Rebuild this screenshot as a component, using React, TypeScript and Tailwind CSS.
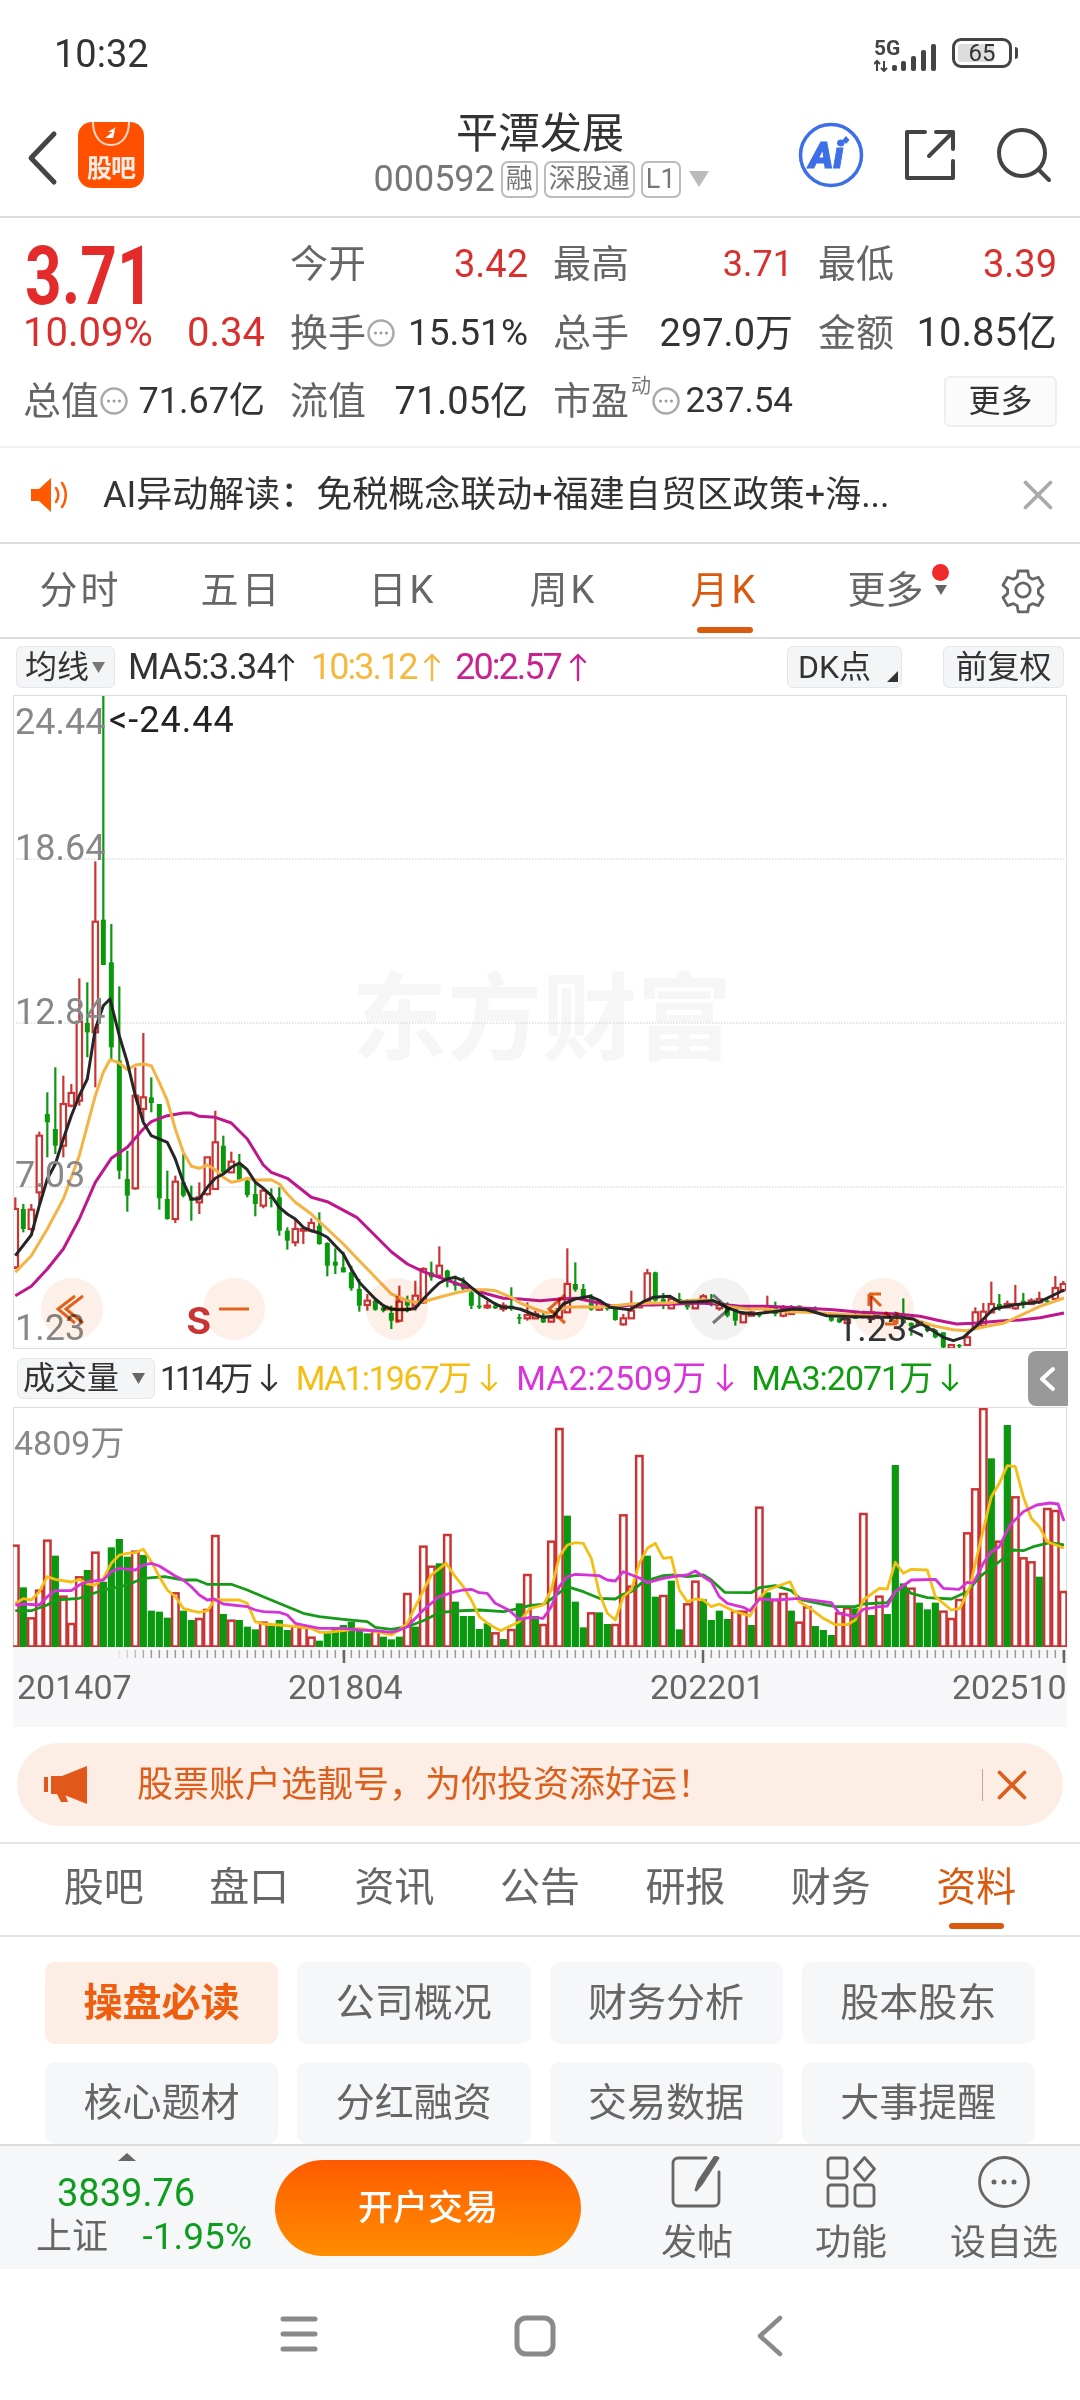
import React from 'react';
import { X } from 'lucide-react';

const RED = '#C93535';
const GREEN = '#0A980F';

// candles: [up, high, top, bottom, low], read off the left half of the chart
const candlesA: [number, number, number, number, number][] = [
  [1, 1105, 1140, 1315, 1320], [0, 1125, 1140, 1200, 1210], [1, 1125, 1142, 1200, 1205], [1, 908, 920, 1090, 1125],
  [0, 790, 855, 880, 985], [0, 715, 900, 950, 975], [1, 740, 825, 950, 985], [1, 765, 792, 830, 835],
  [1, 448, 578, 815, 830], [0, 460, 582, 610, 685], [1, 97, 278, 610, 775], [0, -402, 272, 408, 408],
  [0, 285, 400, 655, 690], [0, 472, 695, 1025, 1050], [0, 965, 1050, 1100, 1148], [1, 715, 800, 1078, 1082],
  [1, 612, 805, 840, 875], [0, 745, 805, 822, 850], [0, 825, 825, 1108, 1142], [0, 1025, 1110, 1170, 1172],
  [1, 1040, 1058, 1170, 1182], [0, 975, 1060, 1100, 1105], [0, 1070, 1105, 1115, 1175], [1, 1060, 1105, 1120, 1155],
  [1, 985, 985, 1095, 1100], [1, 845, 940, 1080, 1082], [0, 920, 950, 1030, 1035], [1, 968, 998, 1030, 1032],
  [0, 975, 1005, 1052, 1055], [0, 1050, 1055, 1098, 1105], [0, 1060, 1095, 1125, 1162], [1, 1075, 1085, 1130, 1138],
  [0, 1078, 1105, 1110, 1135], [0, 1075, 1105, 1205, 1220], [0, 1195, 1205, 1235, 1262], [1, 1170, 1200, 1240, 1252],
  [1, 1195, 1200, 1205, 1245], [1, 1168, 1182, 1205, 1210], [0, 1150, 1190, 1245, 1247], [0, 1240, 1242, 1310, 1342],
  [0, 1258, 1298, 1310, 1335], [0, 1268, 1315, 1330, 1330], [0, 1310, 1330, 1378, 1385], [0, 1350, 1380, 1430, 1448],
  [1, 1395, 1415, 1428, 1445], [0, 1410, 1415, 1442, 1445], [0, 1425, 1435, 1445, 1450], [0, 1430, 1452, 1475, 1500],
  [1, 1370, 1418, 1475, 1480], [0, 1400, 1415, 1430, 1450], [1, 1355, 1400, 1430, 1445], [1, 1315, 1320, 1420, 1425],
  [0, 1298, 1330, 1345, 1355], [1, 1252, 1310, 1340, 1345], [0, 1322, 1325, 1350, 1375], [0, 1340, 1360, 1370, 1385],
  [0, 1345, 1360, 1380, 1385], [0, 1385, 1390, 1430, 1440], [0, 1395, 1430, 1435, 1440], [1, 1415, 1430, 1435, 1440],
  [0, 1420, 1430, 1438, 1440], [1, 1420, 1430, 1440, 1448], [0, 1375, 1430, 1440, 1445], [0, 1455, 1465, 1468, 1485],
];

// the flat right half, in finer units
const candlesB: [number, number, number, number, number][] = [
  [1, 275, 285, 298, 300], [0, 280, 290, 310, 312], [1, 295, 297, 308, 310], [1, 235, 270, 295, 295],
  [1, 88, 195, 280, 282], [0, 130, 195, 212, 218], [0, 195, 210, 235, 240], [0, 225, 235, 272, 275],
  [1, 240, 250, 272, 275], [0, 260, 265, 270, 275], [0, 265, 270, 303, 305], [1, 285, 298, 316, 320],
  [1, 215, 275, 298, 300], [1, 250, 255, 265, 265], [1, 150, 163, 245, 250], [0, 158, 160, 245, 248],
  [0, 222, 240, 258, 270], [1, 235, 240, 268, 268], [0, 222, 240, 250, 252], [0, 240, 250, 265, 272],
  [1, 250, 252, 268, 270], [1, 225, 232, 245, 247], [0, 225, 240, 248, 262], [1, 245, 258, 268, 275],
  [0, 250, 260, 290, 295], [0, 270, 270, 305, 320], [1, 283, 285, 310, 312], [1, 275, 280, 290, 290],
  [0, 280, 285, 290, 295], [1, 230, 265, 275, 280], [0, 248, 265, 285, 292], [1, 258, 270, 290, 295],
  [1, 258, 265, 285, 287], [0, 260, 260, 275, 280], [0, 275, 275, 280, 282], [0, 262, 270, 275, 278],
  [0, 280, 282, 288, 290], [0, 285, 287, 305, 308], [0, 295, 298, 310, 312], [1, 300, 302, 312, 312],
  [0, 280, 295, 298, 300], [0, 275, 285, 295, 298], [1, 232, 280, 300, 302], [1, 290, 290, 295, 295],
  [1, 285, 287, 292, 292], [0, 278, 285, 295, 298], [0, 238, 285, 312, 315], [0, 310, 312, 322, 350],
  [1, 310, 312, 318, 320], [0, 315, 318, 335, 340], [0, 330, 333, 355, 358], [0, 340, 340, 385, 395],
  [1, 375, 378, 388, 388], [0, 375, 378, 382, 388], [1, 340, 355, 378, 380], [1, 265, 280, 325, 332],
  [1, 252, 278, 320, 325], [1, 188, 255, 280, 283], [0, 225, 255, 265, 275], [1, 245, 255, 265, 268],
  [1, 198, 255, 268, 272], [0, 222, 245, 252, 268], [1, 238, 245, 255, 258], [1, 218, 240, 250, 255],
  [0, 240, 245, 250, 255], [1, 171, 207, 240, 245], [1, 186, 195, 213, 220], [1, 183, 186, 207, 210],
];

const candles = [
  ...candlesA.map((c) => [c[0], ...c.slice(1).map((v) => 830 + v / 3)]),
  [1, 830 + 1420 / 3, 830 + 1458 / 3, 830 + 1468 / 3, 830 + 1475 / 3],
  ...candlesB.map((c) => [c[0], ...c.slice(1).map((v) => 1220 + v / 3)]),
];

// volume tops: [up, top]
const volA: [number, number][] = [
  [1, 437], [0, 562], [1, 655], [1, 572], [1, 422], [0, 467], [1, 590], [1, 672], [1, 532], [0, 510], [1, 458],
  [0, 545], [0, 442], [0, 417], [0, 470], [1, 455], [0, 465], [0, 632], [0, 635], [0, 653], [1, 580], [0, 632],
  [0, 660], [1, 657], [1, 630], [1, 408], [0, 642], [1, 662], [0, 660], [0, 680], [0, 688], [1, 668], [0, 678],
  [0, 660], [0, 690], [1, 680], [1, 682], [1, 713], [0, 722], [0, 695], [0, 685], [0, 675], [0, 665], [0, 690],
  [0, 700], [1, 695], [0, 710], [0, 718], [0, 710], [1, 582], [0, 680], [1, 440], [1, 500], [0, 490], [1, 405],
  [0, 605], [0, 648], [0, 648], [0, 687], [0, 670], [1, 700], [0, 717], [1, 690], [0, 610], [1, 525],
  [0, 648], [1, 675], [1, 425], [1, 87], [0, 347], [0, 605], [0, 682], [1, 640], [0, 637], [0, 672], [1, 675],
  [1, 346], [1, 560], [1, 168], [0, 467], [0, 590], [1, 588], [0, 542], [0, 688], [1, 613], [1, 545], [0, 598],
  [0, 660], [0, 632], [0, 657], [1, 635], [1, 635], [0, 675], [1, 323], [0, 577], [1, 600], [1, 582], [0, 632],
  [1, 668], [1, 622], [0, 678], [0, 690], [0, 705], [1, 640], [1, 625], [0, 625], [1, 342], [0, 645], [1, 590],
  [0, 642], [0, 195], [0, 550], [1, 566], [0, 608], [0, 628], [0, 608], [1, 635], [1, 657], [1, 600], [1, 400],
  [1, 268], [1, 2], [0, 175], [1, 425], [0, 75], [1, 292], [1, 475], [1, 487], [0, 530], [1, 327], [1, 333], [1, 576],
];

const toLine = (pts: number[][], ox: number, oy: number) =>
  pts.map(([x, y]) => `${(ox + x / 3).toFixed(1)},${(oy + y / 3).toFixed(1)}`).join(' ');

const ma5 = toLine([[16,1280],[64,1218],[88,1130],[112,1050],[136,1005],[160,930],[184,860],[208,800],[232,750],[256,600],[280,530],[300,510],[328,620],[352,700],[376,800],[400,880],[424,920],[472,940],[496,990],[520,1060],[544,1110],[568,1110],[592,1075],[616,1048],[640,1035],[664,1015],[688,1002],[712,1022],[736,1060],[760,1078],[784,1100],[808,1135],[832,1155],[856,1170],[880,1195],[904,1205],[928,1212],[952,1225],[976,1250],[1000,1275],[1024,1320],[1048,1360],[1072,1385],[1096,1410],[1120,1430],[1144,1440],[1168,1442],[1192,1442],[1216,1438],[1240,1410],[1264,1385],[1288,1362],[1312,1350],[1336,1345],[1360,1355],[1384,1375],[1408,1395],[1432,1410],[1456,1425],[1480,1435],[1504,1435],[1528,1440]], 10, 830)
  + ' ' + toLine([[0,270],[45,288],[70,295],[100,292],[130,255],[165,240],[210,232],[240,245],[270,265],[330,272],[370,248],[400,235],[450,232],[480,250],[530,248],[580,245],[620,265],[660,280],[700,285],[760,278],[820,270],[860,272],[920,290],[1000,293],[1080,295],[1140,295],[1180,300],[1230,330],[1270,355],[1300,365],[1330,355],[1370,320],[1420,270],[1480,258],[1560,248],[1632,213]], 520, 1220);
const ma10 = toLine([[16,1330],[64,1280],[112,1200],[160,1110],[208,980],[232,890],[256,800],[280,730],[300,692],[328,702],[352,722],[376,708],[400,705],[424,710],[448,760],[472,815],[496,900],[520,970],[544,1012],[568,1018],[592,1008],[616,1022],[640,1045],[664,1060],[688,1055],[712,1048],[736,1053],[784,1052],[808,1065],[832,1095],[856,1120],[904,1155],[952,1200],[1000,1245],[1048,1295],[1096,1345],[1144,1395],[1192,1415],[1216,1420],[1240,1418],[1288,1405],[1336,1392],[1384,1382],[1432,1382],[1456,1385],[1504,1405]], 10, 830)
  + ' ' + toLine([[0,252],[40,268],[80,282],[110,275],[140,265],[190,263],[230,265],[270,262],[330,255],[400,252],[450,252],[500,245],[560,242],[620,262],[680,270],[740,270],[800,278],[860,280],[920,283],[1000,288],[1080,292],[1180,300],[1240,320],[1300,332],[1340,335],[1400,322],[1450,313],[1500,290],[1560,262],[1632,237]], 520, 1220);
const ma20 = toLine([[16,1400],[64,1372],[112,1320],[160,1260],[208,1170],[256,1060],[304,988],[352,955],[400,900],[424,878],[472,860],[520,852],[544,852],[568,862],[616,865],[664,882],[712,930],[760,1008],[784,1030],[832,1048],[904,1105],[952,1118],[1040,1165],[1096,1220],[1144,1268],[1192,1305],[1240,1328],[1288,1345],[1336,1362],[1384,1380],[1432,1395],[1480,1408]], 10, 830)
  + ' ' + toLine([[0,240],[60,245],[120,240],[170,238],[220,248],[280,262],[340,258],[400,258],[470,255],[540,252],[600,256],[660,262],[740,262],[800,265],[860,268],[940,272],[1020,280],[1130,285],[1200,292],[1260,305],[1310,315],[1360,313],[1430,307],[1500,303],[1560,296],[1632,282]], 520, 1220);

const vYellow = toLine([[16,610],[40,596],[64,600],[88,575],[112,530],[136,538],[184,546],[208,538],[232,552],[256,555],[280,535],[304,490],[328,465],[352,460],[376,458],[400,448],[424,485],[448,530],[472,570],[496,590],[520,625],[544,632],[568,637],[592,632],[616,598],[640,600],[688,600],[712,610],[736,665],[760,672],[808,675],[856,680],[904,685],[928,697],[952,697],[1000,692],[1048,685],[1096,695],[1144,705],[1168,690],[1192,670],[1216,620],[1264,525],[1308,490],[1336,530],[1360,560],[1384,600],[1408,650],[1440,675],[1472,692],[1496,680],[1528,665]], 10, 1400)
  + ' ' + toLine([[0,625],[40,615],[64,570],[88,470],[112,435],[136,428],[160,430],[184,475],[208,580],[232,640],[256,660],[280,590],[304,570],[328,490],[352,445],[376,430],[400,475],[424,472],[448,570],[472,605],[496,597],[520,600],[544,620],[568,612],[616,635],[660,648],[688,595],[712,570],[780,545],[808,605],[840,625],[880,655],[916,674],[952,674],[976,660],[1000,600],[1048,565],[1072,567],[1096,487],[1120,520],[1144,508],[1192,510],[1216,590],[1264,630],[1290,625],[1320,560],[1350,430],[1384,290],[1408,250],[1432,197],[1456,200],[1480,290],[1504,355],[1528,380],[1552,425],[1602,444]], 530, 1400);
const vMagenta = toLine([[16,615],[40,612],[88,615],[112,590],[136,572],[184,572],[208,555],[232,545],[280,540],[304,515],[328,505],[376,510],[400,495],[424,490],[448,498],[496,528],[520,540],[544,560],[568,585],[592,600],[612,597],[640,612],[712,620],[736,630],[760,635],[808,637],[832,645],[856,670],[880,675],[928,685],[1000,685],[1048,690],[1096,692],[1144,697],[1168,690],[1192,680],[1240,630],[1288,590],[1336,575],[1360,570],[1384,568],[1408,578],[1432,580],[1456,610],[1496,630],[1528,658]], 10, 1400)
  + ' ' + toLine([[0,652],[40,655],[64,620],[88,560],[112,530],[136,523],[208,527],[232,540],[256,543],[280,515],[330,535],[352,548],[400,535],[440,528],[472,525],[496,513],[520,530],[544,545],[568,590],[592,610],[640,622],[660,632],[688,597],[736,600],[808,595],[904,608],[928,640],[976,650],[1000,628],[1048,620],[1072,618],[1096,575],[1144,540],[1216,538],[1240,565],[1288,568],[1312,547],[1330,550],[1360,490],[1384,455],[1408,440],[1440,375],[1480,335],[1520,315],[1560,309],[1584,312],[1602,363]], 530, 1400);
const vGreen = toLine([[16,632],[64,632],[112,615],[136,600],[208,595],[280,570],[352,555],[400,535],[464,530],[520,540],[560,540],[592,553],[664,553],[712,570],[760,590],[880,640],[928,650],[1000,658],[1072,665],[1096,682],[1144,688],[1192,680],[1240,662],[1288,638],[1336,633],[1408,630],[1480,635],[1530,625]], 10, 1400)
  + ' ' + toLine([[0,616],[40,613],[64,597],[112,560],[160,575],[208,595],[256,597],[280,583],[304,575],[340,545],[400,527],[432,525],[472,530],[520,525],[544,540],[584,577],[664,578],[688,563],[736,557],[784,572],[816,600],[880,613],[916,620],[976,620],[1000,612],[1072,608],[1096,575],[1120,560],[1144,580],[1192,593],[1264,597],[1312,575],[1350,530],[1408,485],[1448,450],[1480,452],[1510,440],[1560,428],[1602,435]], 530, 1400);

const cx = (i: number) => 15.33 + 8 * i;

function Arrow({ up, color }: { up?: boolean; color: string }) {
  return (
    <svg width="20" height="30" viewBox="0 0 20 30" fill="none" stroke={color} strokeWidth="2.4" strokeLinecap="round" strokeLinejoin="round">
      {up ? <path d="M10 28V3M3 10l7-7 7 7" /> : <path d="M10 2v25M3 20l7 7 7-7" />}
    </svg>
  );
}

function Dots() {
  return (
    <svg width="30" height="30" viewBox="0 0 30 30" fill="none" className="shrink-0">
      <circle cx="15" cy="15" r="12.5" stroke="#aaa" strokeWidth="2.5" />
      <circle cx="9.5" cy="15" r="1.5" fill="#999" />
      <circle cx="15" cy="15" r="1.5" fill="#999" />
      <circle cx="20.5" cy="15" r="1.5" fill="#999" />
    </svg>
  );
}

function Stat({ label, value, red, dots, size = 'text-[38px]' }: { label: string; value: string; red?: boolean; dots?: boolean; size?: string }) {
  return (
    <div className="flex items-center justify-between">
      <div className="flex items-center">
        <span className="text-[38px] text-[#666]">{label}</span>
        {dots && <Dots />}
      </div>
      <span className={`${size} ${red ? 'text-[#D8302E]' : 'text-[#333]'}`}>{value}</span>
    </div>
  );
}

function Badge({ children }: { children: React.ReactNode }) {
  return (
    <span className="h-[37px] px-[3px] flex items-center border-2 border-[#bbb] rounded-[7px] text-[27px] leading-none text-[#777]">{children}</span>
  );
}

// multiply keeps the candles visible through the round replay buttons
function Bubble({ dark, children }: { dark?: boolean; children?: React.ReactNode }) {
  return (
    <div className={`w-[62px] h-[62px] rounded-full flex items-center justify-center mix-blend-multiply ${dark ? 'bg-[#F2F2F2]' : 'bg-[#FDF0E8]'}`}>
      <svg width="40" height="40" viewBox="0 0 40 40" fill="none" stroke={dark ? '#777' : '#E2621B'} strokeWidth="3">
        {children}
      </svg>
    </div>
  );
}

function PriceChart() {
  return (
    <div className="relative mx-[13px] h-[654px] border border-[#ddd] overflow-hidden">
      {/* watermark */}
      <div className="absolute left-[338px] top-[270px] text-[95px] leading-[110px] font-bold text-[#F6F6F6] whitespace-nowrap">东方财富</div>
      <svg className="absolute left-[-1px] top-[-1px]" width="1054" height="654" viewBox="13 696 1054 654" fill="none">
        {[860, 1024, 1188].map((y) => (
          <line key={y} x1="13" x2="1067" y1={y} y2={y} stroke="#ddd" strokeWidth="1.5" strokeDasharray="1.5 1.5" />
        ))}
        {candles.map((c, i) => {
          const x = cx(i);
          const [up, high, top, bot, low] = c;
          if (up) {
            return (
              <g key={i} stroke={RED}>
                <line x1={x} x2={x} y1={high} y2={top} strokeWidth="2.2" />
                <line x1={x} x2={x} y1={bot} y2={low} strokeWidth="2.2" />
                <rect x={x - 2.7} y={top} width="5.4" height={Math.max(bot - top, 1.5)} fill="#fff" strokeWidth="2.2" />
              </g>
            );
          }
          return (
            <g key={i}>
              <line x1={x} x2={x} y1={high} y2={low} stroke={GREEN} strokeWidth="2.2" />
              <rect x={x - 2.5} y={top} width="5" height={Math.max(bot - top, 1.5)} fill={GREEN} />
            </g>
          );
        })}
        <polyline points={ma20} stroke="#BE178C" strokeWidth="3" strokeLinejoin="round" />
        <polyline points={ma10} stroke="#F4B344" strokeWidth="3" strokeLinejoin="round" />
        <polyline points={ma5} stroke="#262626" strokeWidth="3" strokeLinejoin="round" />
      </svg>
      {/* axis labels */}
      <div className="absolute left-[1px] top-[4px] text-[36px] leading-[44px] text-[#888]">24.44</div>
      <div className="absolute left-[95px] top-[2px] text-[36px] leading-[44px] tracking-[1px] text-[#222]">&lt;-24.44</div>
      <div className="absolute left-[1px] top-[130px] text-[36px] leading-[44px] text-[#888]">18.64</div>
      <div className="absolute left-[1px] top-[294px] text-[36px] leading-[44px] text-[#888]">12.84</div>
      <div className="absolute left-[1px] top-[457px] text-[36px] leading-[44px] text-[#888]">7.03</div>
      <div className="absolute left-[1px] top-[613px] text-[36px] leading-[38px] text-[#888]">1.23</div>
      {/* replay controls over the chart */}
      <div className="absolute left-[27px] top-[582px]">
        <Bubble><path d="M23 7L6 20l17 14M31 7L14 20l17 14" /></Bubble>
      </div>
      <div className="absolute left-[189px] top-[582px]">
        <Bubble><path d="M5 20h30" /></Bubble>
      </div>
      <div className="absolute left-[172px] top-[594px] text-[50px] leading-[54px] font-medium text-[#C93535]">s</div>
      <div className="absolute left-[352px] top-[582px]">
        <Bubble><path d="M20 7v27M6 20h28" /></Bubble>
      </div>
      <div className="absolute left-[513px] top-[582px]">
        <Bubble><path d="M27 6L11 20l16 14" /></Bubble>
      </div>
      <div className="absolute left-[675px] top-[582px]">
        <Bubble dark><path d="M13 6l16 14-16 14" /></Bubble>
      </div>
      <div className="absolute left-[838px] top-[582px]">
        <Bubble><path d="M6 5h12M6 5v12M6 5l12 12M34 35H22M34 35V23M34 35L22 23" /></Bubble>
      </div>
      <div className="absolute left-[823px] top-[614px] text-[36px] leading-[38px] text-[#333]">1.23&lt;-</div>
    </div>
  );
}

function VolumeChart() {
  return (
    <div className="relative mx-[13px] h-[240px] border-x border-t border-[#ddd]">
      <svg className="absolute left-[-1px] top-0" width="1054" height="240" viewBox="13 1408 1054 240" fill="none">
        {volA.map(([up, t], i) => {
          const x = cx(i);
          const top = 1400 + t / 3;
          return up ? (
            <rect key={i} x={x - 3.2} y={Math.max(top, 1409)} width="6.4" height={1646.5 - Math.max(top, 1409)} fill="#fff" stroke={RED} strokeWidth="2.5" />
          ) : (
            <rect key={i} x={x - 3.6} y={top} width="7.2" height={1647.5 - top} fill={GREEN} />
          );
        })}
        <polyline points={vGreen} stroke="#179A17" strokeWidth="2.8" strokeLinejoin="round" />
        <polyline points={vYellow} stroke="#F5BE14" strokeWidth="2.8" strokeLinejoin="round" />
        <polyline points={vMagenta} stroke="#D633D6" strokeWidth="2.8" strokeLinejoin="round" />
      </svg>
      <div className="absolute left-0 top-[13px] text-[34px] leading-[44px] text-[#888]">4809万</div>
    </div>
  );
}

function TimeAxis() {
  const ticks = Array.from({ length: 119 }, (_, i) => i + 13);
  return (
    <div className="relative mx-[13px] h-[80px] bg-[#F7F7F9]">
      <svg className="absolute left-0 top-0" width="1054" height="24" viewBox="13 1647 1054 24" fill="none">
        {ticks.map((i) => (
          <line key={i} x1={cx(i)} x2={cx(i)} y1="1650" y2="1658" stroke="#999" strokeWidth="1.5" opacity={i < 17 ? (i - 12) * 0.2 : 1} />
        ))}
        {[344, 703, 1064].map((x) => (
          <line key={x} x1={x} x2={x} y1="1650" y2="1663" stroke="#666" strokeWidth="2.5" />
        ))}
      </svg>
      <div className="absolute left-0 right-0 top-[18px] h-[44px] pl-[4px] flex items-center text-[34px] leading-none text-[#666]">
        <span className="w-[271px] shrink-0">201407</span>
        <span className="w-[362px] shrink-0">201804</span>
        <span className="w-[302px] shrink-0">202201</span>
        <span>202510</span>
      </div>
    </div>
  );
}

export default function App() {
  const tabs = ['分时', '五日', '日K', '周K', '月K'];
  const sections = ['股吧', '盘口', '资讯', '公告', '研报', '财务', '资料'];
  const grid = ['操盘必读', '公司概况', '财务分析', '股本股东', '核心题材', '分红融资', '交易数据', '大事提醒'];

  return (
    <div className="w-[1080px] h-[2400px] bg-white flex flex-col overflow-hidden font-[Roboto,'Noto_Sans_CJK_SC',sans-serif]">
      {/* Status bar */}
      <div className="h-[100px] shrink-0 pl-[54px] pr-[62px] pt-[29px] flex justify-between items-start">
        <span className="text-[38px] leading-[50px] text-[#333]">10:32</span>
        <div className="flex items-start gap-[14px] pt-[5px]">
          <svg width="64" height="38" viewBox="0 0 64 38" fill="#444">
            <text x="0" y="21" fontSize="21" fontWeight="700" fontFamily="Roboto">5G</text>
            <rect x="18" y="31" width="5" height="6" rx="2" />
            <rect x="27" y="27" width="5" height="10" rx="2" />
            <rect x="37" y="22" width="5" height="15" rx="2" />
            <rect x="47" y="16" width="5" height="21" rx="2" />
            <rect x="57" y="10" width="5" height="27" rx="2" />
            <path d="M3 37V27M0 30l3-3 3 3M10 27v10M7 34l3 3 3-3" fill="none" stroke="#444" strokeWidth="2" />
          </svg>
          <div className="flex items-center gap-[3px] pt-[4px]">
            <div className="relative w-[60px] h-[30px] border-[3px] border-[#444] rounded-[9px] p-[3px] flex">
              <div className="w-[36px] h-full bg-[#DDD] rounded-[3px]"></div>
              <span className="absolute inset-0 flex items-center justify-center text-[24px] leading-none text-[#333]">65</span>
            </div>
            <div className="w-[3px] h-[12px] bg-[#444] rounded-r"></div>
          </div>
        </div>
      </div>

      {/* Header */}
      <div className="h-[118px] shrink-0 border-b-2 border-[#DDD] relative flex items-start pl-[26px] pt-[22px] pr-[28px]">
        <svg width="34" height="56" viewBox="0 0 34 56" fill="none" stroke="#444" strokeWidth="5" strokeLinecap="round" strokeLinejoin="round" className="mt-[8px]">
          <path d="M28 4L5 28l23 24" />
        </svg>
        <div className="relative ml-[18px] w-[66px] h-[66px] rounded-[14px] bg-[#FF5000] overflow-hidden flex items-end justify-center pb-[3px]">
          <svg className="absolute left-0 top-0" width="66" height="34" viewBox="0 0 66 34" fill="none">
            <path d="M15 0c0 15 8 23 18 23S51 15 51 0" stroke="#FFD9C7" strokeWidth="2" />
            <path d="M27 16l10-8-2 8zM30 10l8-5-3 5z" fill="#fff" />
          </svg>
          <span className="text-[25px] leading-[32px] font-bold text-[#FFEDE5] tracking-[-1px]">股吧</span>
        </div>
        <div className="absolute left-0 right-0 top-[8px] flex flex-col items-center">
          <span className="text-[42px] leading-[52px] text-[#333]">平潭发展</span>
          <div className="flex items-center gap-[6px] mt-[-1px] pl-[2px]">
            <span className="text-[36px] leading-[40px] text-[#777]">000592</span>
            <Badge>融</Badge>
            <Badge>深股通</Badge>
            <Badge>L1</Badge>
            <svg width="20" height="16" viewBox="0 0 20 16" fill="#BBB" className="ml-[2px]"><path d="M0 0h20L10 16z" /></svg>
          </div>
        </div>
        <div className="ml-auto flex items-center gap-[39px]">
          <svg width="66" height="66" viewBox="0 0 66 66" fill="none">
            <circle cx="33" cy="33" r="30.5" stroke="#3D6FE8" strokeWidth="3.5" />
            <text x="11" y="46" fontSize="37" fontWeight="900" fontStyle="italic" fill="#3D6FE8" stroke="#3D6FE8" strokeWidth="1" fontFamily="Roboto">Ai</text>
            <path d="M48 14l3.5 4-3.5 4-3.5-4z" fill="#3D6FE8" />
          </svg>
          <svg width="54" height="54" viewBox="0 0 54 54" fill="none" stroke="#444" strokeWidth="4" strokeLinecap="round" strokeLinejoin="round">
            <path d="M22 4H4v46h46V33" />
            <path d="M50 4L26 28M33 4h17v17" />
          </svg>
          <svg width="56" height="56" viewBox="0 0 56 56" fill="none" stroke="#444" strokeWidth="4" strokeLinecap="round">
            <circle cx="26" cy="26" r="23" />
            <path d="M43 43l10 10" />
          </svg>
        </div>
      </div>

      {/* Quote */}
      <div className="h-[230px] shrink-0 border-b-2 border-[#F0F0F0] pl-[23px] pt-[12px] grid grid-cols-[242px_238px_240px_239px] grid-rows-[68px_70px_66px] gap-x-[25px] items-center leading-[44px]">
        <div className="h-[68px] pt-[16px] pl-[2px]">
          <span className="block origin-left scale-x-[0.78] text-[82px] leading-[60px] font-bold text-[#E32B2B]">3.71</span>
        </div>
        <Stat label="今开" value="3.42" red />
        <Stat label="最高" value="3.71" red size="text-[36px]" />
        <Stat label="最低" value="3.39" red />
        <div className="flex justify-between text-[#D8302E] text-[40px]">
          <span>10.09%</span>
          <span>0.34</span>
        </div>
        <Stat label="换手" value="15.51%" dots size="text-[37px]" />
        <Stat label="总手" value="297.0万" />
        <Stat label="金额" value="10.85亿" size="text-[40px]" />
        <Stat label="总值" value="71.67亿" dots size="text-[36px]" />
        <Stat label="流值" value="71.05亿" />
        <div className="flex items-center justify-between">
          <div className="relative flex items-center">
            <span className="text-[38px] text-[#666]">市盈</span>
            <span className="text-[20px] leading-[20px] text-[#777] ml-[2px] mt-[-30px]">动</span>
            <Dots />
          </div>
          <span className="text-[35px] text-[#333]">237.54</span>
        </div>
        <div className="flex justify-end">
          <div className="w-[113px] h-[51px] rounded-[6px] border-2 border-[#EEE] bg-[#FBFBFB] flex items-center justify-center text-[32px] text-[#333]">更多</div>
        </div>
      </div>

      {/* Notice */}
      <div className="h-[96px] shrink-0 border-b-2 border-[#DDD] pl-[31px] pr-[17px] flex items-center">
        <svg width="42" height="34" viewBox="0 0 42 34" fill="none">
          <path d="M0 11h8L20 0v34L8 23H0z" fill="#FF5A00" />
          <path d="M25 10c3 4 3 10 0 14M31 5c5 7 5 17 0 24" stroke="#FF5A00" strokeWidth="2.5" strokeLinecap="round" />
        </svg>
        <span className="ml-[30px] text-[36px] leading-none text-[#333] whitespace-nowrap">AI异动解读：免税概念联动+福建自贸区政策+海...</span>
        <X size={50} strokeWidth={1.8} className="ml-auto text-[#AAA]" />
      </div>

      {/* Period tabs */}
      <div className="h-[95px] shrink-0 border-b-2 border-[#DDD] flex items-stretch">
        {tabs.map((t) => (
          <div key={t} className="relative w-[161px] flex items-center justify-center">
            <span className={`text-[38px] leading-none tracking-[3px] pb-[2px] ${t === '月K' ? 'text-[#D9590F]' : 'text-[#666]'}`}>{t}</span>
            {t === '月K' && <div className="absolute bottom-[4px] w-[56px] h-[6px] rounded-full bg-[#D9590F]"></div>}
          </div>
        ))}
        <div className="relative w-[161px] flex items-center justify-center">
          <span className="text-[38px] leading-none text-[#666] pb-[2px]">更多</span>
          <div className="absolute right-[17px] top-[20px] w-[17px] h-[17px] rounded-full bg-[#EE2B2B]"></div>
          <svg className="absolute right-[19px] top-[41px]" width="12" height="10" viewBox="0 0 12 10" fill="#666"><path d="M0 0h12L6 10z" /></svg>
        </div>
        <div className="flex-1 flex items-center pl-[33px] pb-[2px]">
          <svg width="48" height="50" viewBox="0 0 24 24" fill="none" stroke="#666" strokeWidth="1.4" strokeLinejoin="round">
            <path d="M9.6 2.5h4.8l.5 3 1.9 1.1 2.9-1 2.3 4-2.3 2v2.2l2.3 2-2.3 4-2.9-1-1.9 1.1-.5 3H9.6l-.5-3-1.9-1.1-2.9 1-2.3-4 2.3-2v-2.2l-2.3-2 2.3-4 2.9 1 1.9-1.1z" />
            <circle cx="12" cy="12" r="3.6" />
          </svg>
        </div>
      </div>

      {/* MA legend */}
      <div className="h-[56px] shrink-0 pl-[16px] pr-[16px] flex items-center text-[36px] leading-none">
        <div className="w-[99px] h-[42px] rounded-[6px] border border-[#E5E6EA] bg-[#F4F5F7] flex items-center pl-[8px] gap-[3px] text-[32px] text-[#333]">
          均线
          <svg width="13" height="11" viewBox="0 0 13 11" fill="#777"><path d="M0 0h13L6.5 11z" /></svg>
        </div>
        <span className="ml-[13px] text-[#333] tracking-[-0.8px]">MA5:3.34</span>
        <Arrow up color="#333" />
        <span className="ml-[15px] text-[#F5B841] tracking-[-2px]">10:3.12</span>
        <span className="ml-[6px]"><Arrow up color="#F5B841" /></span>
        <span className="ml-[13px] text-[#C9238F] tracking-[-2px]">20:2.57</span>
        <span className="ml-[7px]"><Arrow up color="#C9238F" /></span>
        <div className="relative ml-auto w-[115px] h-[42px] rounded-[6px] border border-[#E5E6EA] bg-[#F4F5F7] flex items-center pl-[10px] text-[32px] text-[#333]">
          DK点
          <svg className="absolute right-[3px] bottom-[5px]" width="11" height="11" viewBox="0 0 11 11" fill="#333"><path d="M11 0v11H0z" /></svg>
        </div>
        <div className="ml-[41px] w-[121px] h-[42px] rounded-[6px] border border-[#E5E6EA] bg-[#F4F5F7] flex items-center justify-center text-[32px] text-[#333]">前复权</div>
      </div>

      <PriceChart />

      {/* Volume legend */}
      <div className="relative h-[58px] shrink-0 pl-[17px] flex items-center text-[34px] leading-none">
        <div className="w-[138px] h-[41px] rounded-[6px] border border-[#E5E6EA] bg-[#F4F5F7] flex items-center pl-[5px] text-[32px] text-[#333]">
          成交量
          <svg className="ml-[13px]" width="13" height="11" viewBox="0 0 13 11" fill="#666"><path d="M0 0h13L6.5 11z" /></svg>
        </div>
        <span className="ml-[5px] text-[33px] text-[#333] tracking-[-3.5px]">1114万</span>
        <span className="ml-[9px]"><Arrow color="#333" /></span>
        <span className="ml-[17px] text-[#F5BE14] tracking-[-1.7px]">MA1:1967万</span>
        <span className="ml-[9px]"><Arrow color="#F5BE14" /></span>
        <span className="ml-[17px] text-[#DB33DB]">MA2:2509万</span>
        <span className="ml-[9px]"><Arrow color="#DB33DB" /></span>
        <span className="ml-[16px] text-[#0F9D0F] tracking-[-1px]">MA3:2071万</span>
        <span className="ml-[8px]"><Arrow color="#0F9D0F" /></span>
        <div className="absolute right-[12px] top-[2px] w-[40px] h-[55px] rounded-l-[8px] bg-[#999] flex items-center justify-center">
          <svg width="20" height="26" viewBox="0 0 20 26" fill="none" stroke="#fff" strokeWidth="4" strokeLinecap="round" strokeLinejoin="round"><path d="M15 3L4 13l11 10" /></svg>
        </div>
      </div>

      <VolumeChart />
      <TimeAxis />

      {/* Promo banner */}
      <div className="mt-[16px] mx-[17px] h-[83px] shrink-0 rounded-full bg-[#FCEDE5] pl-[27px] pr-[26px] flex items-center">
        <svg width="44" height="38" viewBox="0 0 44 38" fill="#E2581A">
          <path d="M0 11h4v15H0zM7 10h11L43 0v38L18 28H7z" />
          <path d="M13 28h8l3 8h-7z" />
        </svg>
        <span className="ml-[49px] text-[36px] leading-none text-[#DC5F1E] whitespace-nowrap">股票账户选靓号，为你投资添好运！</span>
        <div className="ml-auto w-[1px] h-[32px] bg-[#C9A08A]"></div>
        <X size={50} strokeWidth={1.8} className="ml-[4px] text-[#DC5F1E]" />
      </div>

      {/* Section tabs */}
      <div className="mt-[16px] h-[95px] shrink-0 border-y-2 border-[#E5E5E5] px-[31px] grid grid-cols-7 items-stretch">
        {sections.map((s) => (
          <div key={s} className="relative flex items-center justify-center">
            <span className={`text-[40px] leading-none pb-[3px] ${s === '资料' ? 'text-[#D9590F]' : 'text-[#666]'}`}>{s}</span>
            {s === '资料' && <div className="absolute bottom-[6px] w-[55px] h-[6px] rounded-full bg-[#D9590F]"></div>}
          </div>
        ))}
      </div>

      {/* Profile buttons */}
      <div className="flex-1 min-h-0 overflow-hidden px-[45px] pt-[25px] grid grid-cols-4 gap-x-[19px] gap-y-[18px] content-start">
        {grid.map((g) => (
          <div key={g} className={`h-[82px] rounded-[10px] flex items-center justify-center text-[39px] leading-none ${g === '操盘必读' ? 'bg-[#FCEDE5] text-[#EE5E0E] font-bold' : 'bg-[#F6F7F9] text-[#666]'}`}>{g}</div>
        ))}
      </div>

      {/* Bottom action bar */}
      <div className="h-[125px] shrink-0 border-t-2 border-[#DDD] bg-[#F6F7F9] pl-[36px] flex items-stretch">
        <div className="relative w-[216px] flex flex-col pt-[25px] leading-[44px]">
          <svg className="absolute left-[82px] top-[7px]" width="18" height="8" viewBox="0 0 18 8" fill="#666"><path d="M9 0l9 8H0z" /></svg>
          <span className="pl-[21px] text-[#0F9D1F] text-[38px]">3839.76</span>
          <div className="flex justify-between text-[#0F9D1F] text-[37px]">
            <span className="text-[36px] text-[#666]">上证</span>
            <span>-1.95%</span>
          </div>
        </div>
        <div className="ml-[23px] mt-[14px] w-[306px] h-[96px] rounded-full bg-gradient-to-b from-[#FF5A00] to-[#FF8C00] flex items-center justify-center text-[35px] leading-none font-medium text-white">开户交易</div>
        <div className="ml-[66px] w-[100px] flex flex-col items-center pt-[10px] text-[#666] text-[36px] leading-none">
          <svg width="54" height="52" viewBox="0 0 54 52" fill="none" stroke="#666" strokeWidth="2.8" strokeLinecap="round" strokeLinejoin="round">
            <path d="M36 2H8a5 5 0 0 0-5 5v38a5 5 0 0 0 5 5h36a5 5 0 0 0 5-5V16" />
            <path d="M48 2L32 27l-6 7 3-9L45 1z" fill="#666" />
          </svg>
          <span className="mt-[17px]">发帖</span>
        </div>
        <div className="ml-[54px] w-[100px] flex flex-col items-center pt-[10px] text-[#666] text-[36px] leading-none">
          <svg width="50" height="52" viewBox="0 0 50 52" fill="none" stroke="#666" strokeWidth="2.8" strokeLinejoin="round">
            <rect x="2" y="2" width="19" height="20" rx="3" />
            <rect x="2" y="29" width="19" height="21" rx="3" />
            <rect x="29" y="29" width="19" height="21" rx="3" />
            <path d="M38.5 1.5l10 11.5-10 11.5-10-11.5z" />
          </svg>
          <span className="mt-[17px]">功能</span>
        </div>
        <div className="ml-[48px] w-[110px] flex flex-col items-center pt-[10px] text-[#666] text-[36px] leading-none">
          <svg width="52" height="52" viewBox="0 0 52 52" fill="none">
            <circle cx="26" cy="26" r="24.5" stroke="#666" strokeWidth="2.8" />
            <circle cx="16" cy="26" r="2.5" fill="#666" />
            <circle cx="26" cy="26" r="2.5" fill="#666" />
            <circle cx="36" cy="26" r="2.5" fill="#666" />
          </svg>
          <span className="mt-[17px] whitespace-nowrap">设自选</span>
        </div>
      </div>

      {/* Navigation bar */}
      <div className="h-[131px] shrink-0 pl-[280px] pt-[46px] flex items-start">
        <svg width="38" height="38" viewBox="0 0 38 38" fill="none" stroke="#8A8A8A" strokeWidth="5" strokeLinecap="round">
          <path d="M3 4h32M3 19h32M3 34h32" />
        </svg>
        <svg className="ml-[196px]" width="42" height="42" viewBox="0 0 42 42" fill="none" stroke="#8A8A8A" strokeWidth="5">
          <rect x="3" y="3" width="36" height="36" rx="9" />
        </svg>
        <svg className="ml-[200px]" width="28" height="42" viewBox="0 0 28 42" fill="none" stroke="#8A8A8A" strokeWidth="4.5" strokeLinecap="round" strokeLinejoin="round">
          <path d="M24 3L4 21l20 18" />
        </svg>
      </div>
    </div>
  );
}
